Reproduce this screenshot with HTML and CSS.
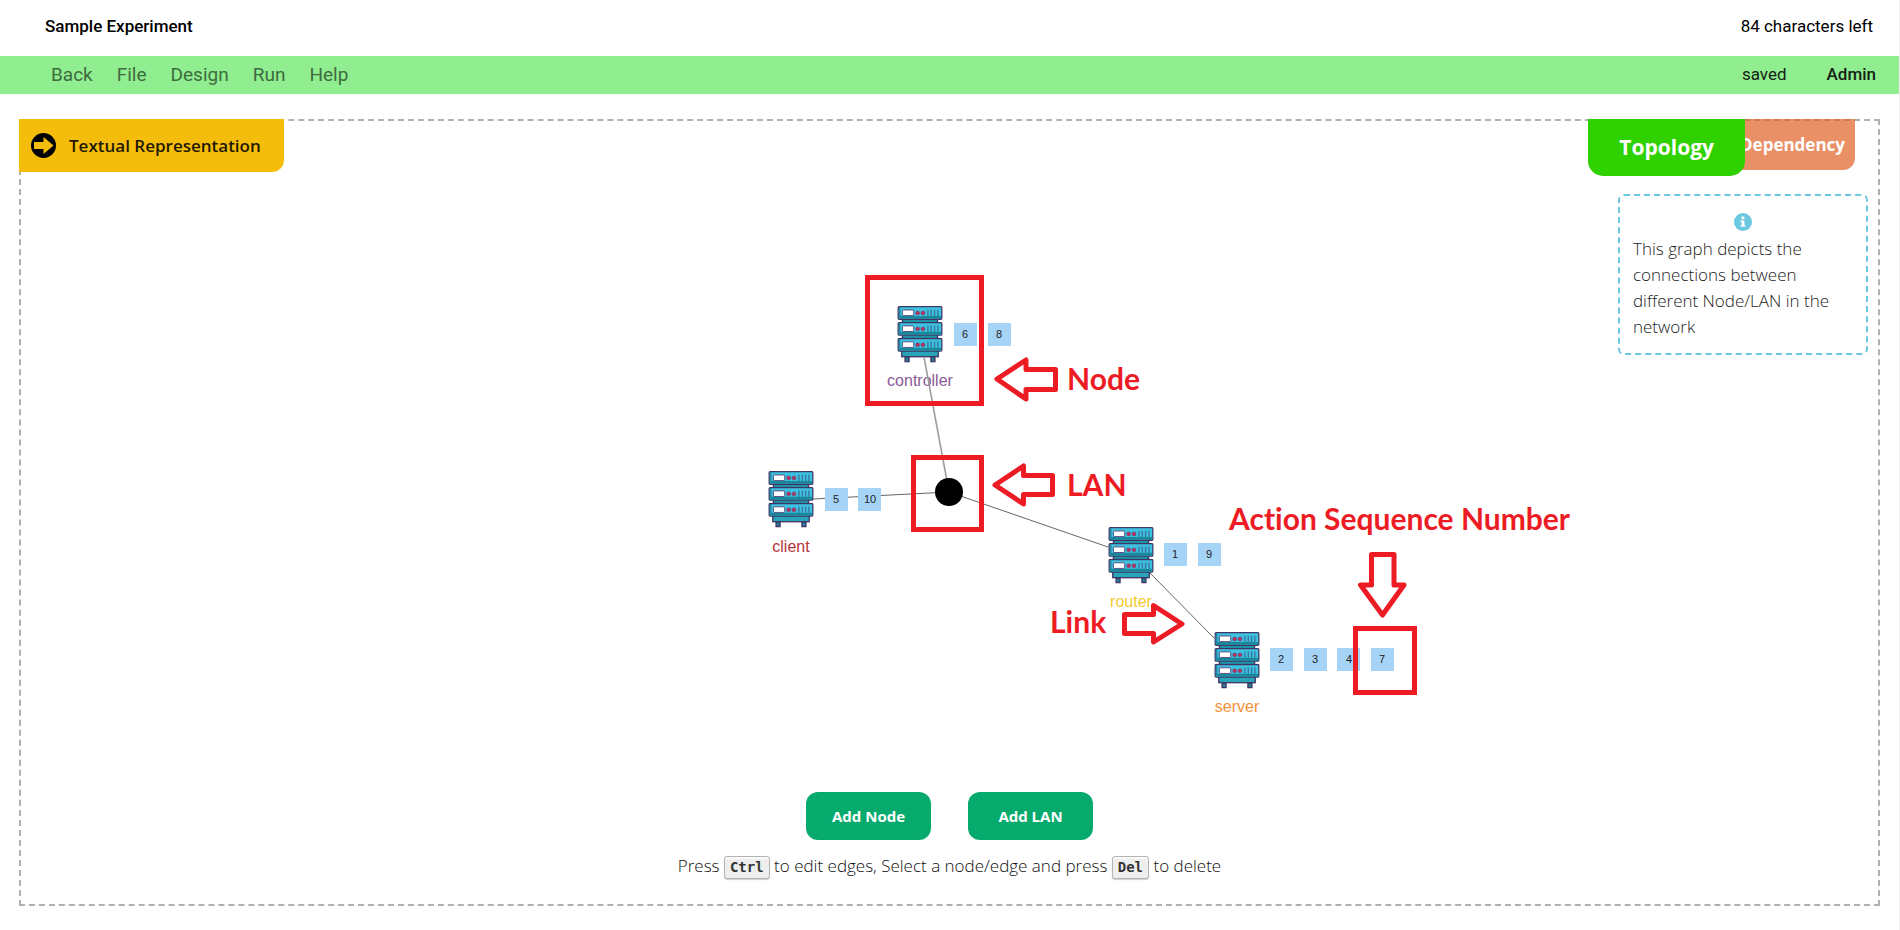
FILE: index.html
```html
<!DOCTYPE html>
<html lang="en">
<head>
<meta charset="utf-8">
<title>Sample Experiment</title>
<link rel="stylesheet" href="styles.css">
</head>
<body>
<header class="title-row">
  <input class="experiment-name" type="text" value="Sample Experiment" aria-label="Experiment name">
  <span class="chars-left">84 characters left</span>
</header>
<nav class="menu-bar">
  <div class="menu">
    <a href="#">Back</a>
    <a href="#">File</a>
    <a href="#">Design</a>
    <a href="#">Run</a>
    <a href="#">Help</a>
  </div>
  <div class="status">
    <span class="saved">saved</span>
    <span class="user">Admin</span>
  </div>
</nav>
<main class="panel">
  <div class="panel-top">
    <button class="textual" type="button">
      <svg class="textual-icon" viewBox="0 0 25 25" aria-hidden="true"><circle cx="12.500" cy="12.500" r="12.500"/><path d="M3 9H12.500V4L22.500 12.500L12.500 21V16H3Z" fill="#f5bd0b"/></svg>
      <span>Textual Representation</span>
    </button>
    <div class="tabs">
      <button class="tab topology" type="button">Topology</button>
      <button class="tab dependency" type="button">Dependency</button>
    </div>
  </div>
  <aside class="info">
    <svg class="info-icon" viewBox="0 0 18 18" aria-hidden="true"><circle cx="9" cy="9" r="9" fill="#6cc7e1"/><path d="M7.400 3.600h3v2.600h-3zM6.600 7.400h3.800v4.800h1v1.600H6.600v-1.600h1V9h-1z" fill="#fff"/></svg>
    <p>This graph depicts the connections between different Node/LAN in the network</p>
  </aside>
  <svg class="graph" viewBox="290 260 1320 460" role="img" aria-label="Network topology">
    <defs>
      <symbol id="unit" viewBox="0 0 138 44">
        <rect x="3" y="3" width="132" height="38" rx="3" fill="#3cc3e0" stroke="#413566" stroke-width="4"/>
        <path d="M5 31H133V39H5Z" fill="#168a9b"/>
        <path d="M5 5H10V39H5Z" fill="#2387a0"/>
        <rect x="16" y="13" width="34" height="17" rx="2" fill="#fff" stroke="#5b5286" stroke-width="3"/>
        <circle cx="62" cy="22" r="6" fill="#c22c56" stroke="#5b5286" stroke-width="2"/>
        <circle cx="78" cy="22" r="6" fill="#c22c56" stroke="#5b5286" stroke-width="2"/>
        <path d="M93 12V31M103 12V31M113 12V31M123 12V31" stroke="#3d719d" stroke-width="4"/>
      </symbol>
      <symbol id="rack" viewBox="0 0 138 172">
        <rect x="16" y="36" width="106" height="112" fill="#1d93a6" stroke="#413566" stroke-width="4"/>
        <rect x="14" y="134" width="110" height="19" fill="#28a5b9" stroke="#413566" stroke-width="4"/>
        <path d="M24 154H36V168H24ZM102 154H114V168H102Z" fill="#237d93" stroke="#413566" stroke-width="4"/>
        <use href="#unit" x="0" y="-1" width="138" height="44"/>
        <use href="#unit" x="0" y="47" width="138" height="44"/>
        <use href="#unit" x="0" y="95" width="138" height="44"/>
      </symbol>
    </defs>
    <g class="edges">
      <path d="M813 499L949 492L1108 547M1149 572L1214 638"/>
    </g>
    <use href="#rack" x="897" y="306" width="46" height="57"/>
    <use href="#rack" x="768" y="471" width="46" height="57"/>
    <use href="#rack" x="1108" y="527" width="46" height="57"/>
    <use href="#rack" x="1214" y="632" width="46" height="57"/>
    <g class="node-label">
      <text x="920" y="386" fill="#8b5a96">controller</text>
      <text x="791" y="552" fill="#b5363c">client</text>
      <text x="1131" y="607" fill="#f3ca2c">router</text>
      <text x="1237" y="712" fill="#f2913a">server</text>
    </g>
    <path class="edge-front" d="M924 357L949 492"/>
    <circle cx="949" cy="492" r="14"/>
    <g class="badge">
      <rect x="954" y="323" width="23" height="23"/><text x="965" y="338">6</text>
      <rect x="988" y="323" width="23" height="23"/><text x="999" y="338">8</text>
      <rect x="825" y="488" width="23" height="23"/><text x="836" y="503">5</text>
      <rect x="858" y="488" width="23" height="23"/><text x="870" y="503">10</text>
      <rect x="1164" y="543" width="23" height="23"/><text x="1175" y="558">1</text>
      <rect x="1198" y="543" width="23" height="23"/><text x="1209" y="558">9</text>
      <rect x="1270" y="648" width="23" height="23"/><text x="1281" y="663">2</text>
      <rect x="1304" y="648" width="23" height="23"/><text x="1315" y="663">3</text>
      <rect x="1337" y="648" width="23" height="23"/><text x="1349" y="663">4</text>
      <rect x="1371" y="648" width="23" height="23"/><text x="1382" y="663">7</text>
    </g>
    <g class="marks">
      <rect x="867.500" y="277.500" width="114" height="126"/>
      <rect x="913.500" y="457.500" width="68" height="72"/>
      <rect x="1355.500" y="628.500" width="59" height="64"/>
      <path d="M997 379L1026 360V369.500H1055.500V389.500H1026V399Z"/>
      <path d="M995 485L1023.500 466V475.500H1052.500V494.500H1023.500V504Z"/>
      <path d="M1124.500 614.500H1153.500V605.500L1182 624L1153.500 642V633.500H1124.500Z"/>
      <path d="M1371.500 554.500H1394V585H1404L1382.500 615L1360.500 585H1371.500Z"/>
    </g>
    <g class="mark-label">
      <text x="1067" y="390">Node</text>
      <text x="1067" y="496">LAN</text>
      <text x="1050" y="633">Link</text>
      <text x="1229" y="530">Action Sequence Number</text>
    </g>
  </svg>
  <div class="actions">
    <button class="add" type="button">Add Node</button>
    <button class="add" type="button">Add LAN</button>
  </div>
  <p class="hint">Press <kbd>Ctrl</kbd> to edit edges, Select a node/edge and press <kbd>Del</kbd> to delete</p>
</main>
</body>
</html>
```
FILE: styles.css
```css
* { box-sizing: border-box; }
body {
  margin: 0;
  min-height: 100vh;
  border-right: 1px solid #eeeeee;
  background: #fff;
  color: #000;
  font-family: "Open Sans", "Noto Sans", sans-serif;
}
button { border: 0; font-family: inherit; cursor: pointer; }
p { margin: 0; }

.title-row {
  display: flex;
  align-items: center;
  justify-content: space-between;
  height: 56px;
  padding: 0 26px 5px 45px;
  font-family: Roboto, sans-serif;
  font-size: 17px;
}
.experiment-name {
  width: 400px;
  padding: 0;
  border: 0;
  background: none;
  font: 500 17px Roboto, sans-serif;
  color: #000;
}

.menu-bar {
  display: flex;
  align-items: center;
  justify-content: space-between;
  height: 38px;
  padding: 0 23px 2px 51px;
  background: #90ee90;
  font-family: Roboto, sans-serif;
  font-size: 17px;
}
.menu { display: flex; gap: 24px; font-size: 19px; }
.menu a { color: #3e6b3e; text-decoration: none; }
.status { display: flex; gap: 40px; color: #142114; }
.user { font-weight: 500; }

.panel {
  position: relative;
  display: flex;
  flex-direction: column;
  align-items: center;
  margin: 25px 19px 24px;
  padding-bottom: 22px;
  border: 2px dashed #b0b0b0;
}
.panel-top {
  display: flex;
  align-items: flex-start;
  align-self: stretch;
  justify-content: space-between;
  margin: -2px 0 0 -2px;
  padding-right: 23px;
}
.textual {
  display: flex;
  align-items: center;
  gap: 13px;
  height: 53px;
  padding: 0 23px 0 12px;
  border-radius: 0 0 12px 0;
  background: #f5bd0b;
  color: #1f1803;
  font-size: 17px;
  font-weight: 600;
}
.textual-icon { width: 25px; height: 25px; }
.tabs { display: flex; align-items: flex-start; }
.tab { color: #fff; font-weight: 700; }
.topology {
  position: relative;
  z-index: 1;
  height: 57px;
  padding: 0 31px 2px;
  border-radius: 0 0 15px 15px;
  background: #30d100;
  font-size: 21px;
}
.dependency {
  height: 51px;
  margin-left: -18px;
  padding: 0 10px 0 13px;
  border-radius: 0 0 12px 12px;
  background: rgba(224, 97, 38, 0.7);
  font-size: 17px;
}

.info {
  position: absolute;
  top: 73px;
  right: 10px;
  width: 250px;
  padding: 17px 13px 13px;
  border: 2px dashed #6cc7e1;
  border-radius: 6px;
  color: #222;
  font-size: 17px;
  font-weight: 300;
  line-height: 26px;
}
.info-icon { display: block; width: 18px; height: 18px; margin: 0 auto 5px; }

.graph {
  width: 1320px;
  max-width: 100%;
  height: auto;
  margin-top: 84px;
}
.edges, .edge-front { fill: none; stroke: #666; stroke-width: 1px; }
.edge-front { stroke: #999; stroke-width: 1.5px; }
.node-label { font: 16px "Liberation Sans", sans-serif; text-anchor: middle; }
.badge { font: 11px "Liberation Sans", sans-serif; text-anchor: middle; }
.badge rect { fill: #a6d4f7; }
.badge text { fill: #222; }
.marks { fill: none; stroke: #ed1c24; stroke-width: 5px; stroke-linejoin: miter; }
.marks path { stroke-linejoin: round; }
.mark-label { fill: #ed1c24; font: 700 30px Lato, sans-serif; font-variant-ligatures: none; }

.actions { display: flex; gap: 37px; margin-top: 72px; }
.add {
  width: 125px;
  height: 48px;
  border-radius: 12px;
  background: #06aa6d;
  color: #fff;
  font-size: 15px;
  font-weight: 700;
}
.hint {
  margin-top: 10px;
  color: #111;
  font-size: 17px;
  font-weight: 300;
  line-height: 32px;
}
kbd {
  display: inline-block;
  padding: 0 5px;
  border: 1px solid #b4b4b4;
  border-radius: 3px;
  background: #eee;
  box-shadow: 0 1px 1px rgba(0, 0, 0, 0.2), inset 0 2px 0 rgba(255, 255, 255, 0.7);
  color: #333;
  font: 700 14px/21px "DejaVu Sans Mono", monospace;
}
```
